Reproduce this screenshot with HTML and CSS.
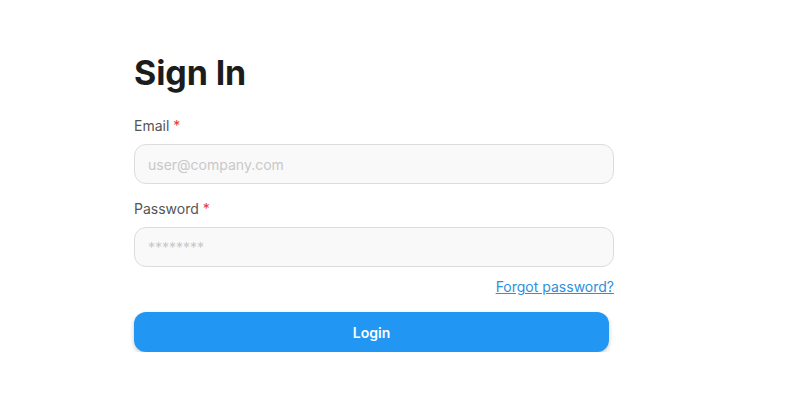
FILE: index.html
```html
<!DOCTYPE html>
<html lang="en">
<head>
<meta charset="utf-8">
<title>Sign In</title>
<link rel="stylesheet" href="styles.css">
</head>
<body>
<main class="page">
  <form class="signin">
    <h1 class="title">Sign In</h1>
    <div class="field">
      <label class="label" for="email">Email <span class="req">*</span></label>
      <input class="input" id="email" type="email" placeholder="user@company.com">
    </div>
    <div class="field">
      <label class="label" for="password">Password <span class="req">*</span></label>
      <input class="input" id="password" type="password" placeholder="********">
    </div>
    <div class="forgot-row">
      <a class="forgot" href="#">Forgot password?</a>
    </div>
    <button class="btn" type="button">Login</button>
  </form>
</main>
</body>
</html>
```

FILE: styles.css
```css
* { box-sizing: border-box; }
html, body { margin: 0; padding: 0; background: #ffffff; }
body {
  font-family: Inter, "Noto Sans", "Liberation Sans", sans-serif;
  color: #1a1a1a;
}
.page {
  padding: 53px 0 0 134px;
}
.signin {
  width: 480px;
  display: flex;
  flex-direction: column;
}
.title {
  margin: 0 0 23px;
  font-size: 34px;
  line-height: 40px;
  font-weight: 700;
  color: #1c1c1c;
  letter-spacing: -0.1px;
}
.field {
  display: flex;
  flex-direction: column;
  gap: 8px;
  margin-bottom: 15px;
}
.field + .field { margin-bottom: 0; }
.label {
  font-size: 14px;
  line-height: 20px;
  color: #555555;
}
.req { color: #e53935; }
.input {
  height: 40px;
  width: 100%;
  border: 1px solid #dcdcdc;
  border-radius: 12px;
  background: #f9f9f9;
  padding: 0 13px;
  font-family: inherit;
  font-size: 14px;
  color: #333;
  outline: none;
}
.input::placeholder { color: #c8c8c8; }
.forgot-row {
  display: flex;
  justify-content: flex-end;
  margin-top: 10px;
}
.forgot {
  font-size: 14px;
  line-height: 20px;
  color: #2f8fdc;
  text-decoration: underline;
}
.btn {
  margin-top: 15px;
  width: 475px;
  height: 40px;
  border: none;
  border-radius: 12px;
  background: #2196f3;
  color: #ffffff;
  font-family: inherit;
  font-size: 14px;
  font-weight: 600;
  box-shadow: 0 2px 4px rgba(0, 0, 0, 0.22);
  cursor: pointer;
}
```
